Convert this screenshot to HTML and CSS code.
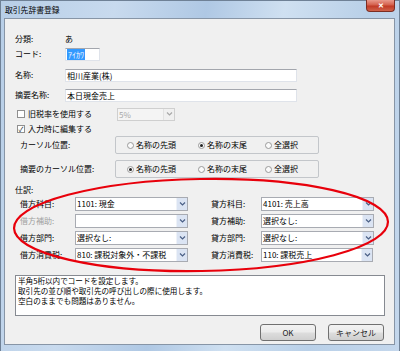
FILE: index.html
```html
<!DOCTYPE html>
<html lang="ja">
<head>
  <meta charset="UTF-8" />
  <title>取引先辞書登録</title>
  <link rel="stylesheet" href="styles.css">
</head>
<body>
  <div class="window">
    <div class="titlebar">
      <span class="title">取引先辞書登録</span>
      <span class="close">✕</span>
    </div>

    <div class="client">
      <div class="row r-kind"><span class="lbl">分類:</span><span>あ</span></div>
      <div class="row r-code"><span class="lbl">コード:</span><span class="edit code"><span class="hl">ｱｲｶﾜ</span></span></div>
      <div class="row r-name"><span class="lbl">名称:</span><span class="edit wide">相川産業(株)</span></div>
      <div class="row r-memo"><span class="lbl">摘要名称:</span><span class="edit wide">本日現金売上</span></div>

      <div class="row r-old">
        <span class="check-wrap"><span class="check"></span>旧税率を使用する</span>
        <span class="combo disabled rate"><span class="val">5%</span><span class="btn"><svg width="7" height="4" viewBox="0 0 7 4"><path d="M1 0.5 L3.5 3 L6 0.5" fill="none" stroke="#a8a8a8" stroke-width="1.2"/></svg></span></span>
      </div>
      <div class="row r-edit">
        <span class="check-wrap"><span class="check on">✓</span>入力時に編集する</span>
      </div>

      <div class="row r-cursor">
        <span class="lbl2">カーソル位置:</span>
        <div class="radio-box">
          <span class="opt"><span class="radio"></span>名称の先頭</span>
          <span class="opt"><span class="radio on"></span>名称の末尾</span>
          <span class="opt"><span class="radio"></span>全選択</span>
        </div>
      </div>
      <div class="row r-cursor2">
        <span class="lbl2">摘要のカーソル位置:</span>
        <div class="radio-box">
          <span class="opt"><span class="radio on"></span>名称の先頭</span>
          <span class="opt"><span class="radio"></span>名称の末尾</span>
          <span class="opt"><span class="radio"></span>全選択</span>
        </div>
      </div>

      <div class="row r-journal">仕訳:</div>
      <div class="journal" id="journal"></div>

      <div class="note">半角5桁以内でコードを設定します。<br>取引先の並び順や取引先の呼び出しの際に使用します。<br>空白のままでも問題はありません。</div>

      <div class="buttons">
        <button class="push">OK</button>
        <button class="push">キャンセル</button>
      </div>
    </div>
  </div>

  <svg class="mark" width="400" height="351" viewBox="0 0 400 351">
    <ellipse cx="201" cy="225" rx="187" ry="46" fill="none" stroke="#e8000b" stroke-width="2.2" transform="rotate(-1 201 225)"/>
  </svg>

  <script>
    const rows = [
      ["借方科目:", "1101: 現金", false, "貸方科目:", "4101: 売上高"],
      ["借方補助:", "", true, "貸方補助:", "選択なし:"],
      ["借方部門:", "選択なし:", false, "貸方部門:", "選択なし:"],
      ["借方消費税:", "810: 課税対象外・不課税", false, "貸方消費税:", "110: 課税売上"]
    ];

    const arrow = '<span class="btn"><svg width="7" height="4" viewBox="0 0 7 4"><path d="M1 0.5 L3.5 3 L6 0.5" fill="none" stroke="#4a5f86" stroke-width="1.2"/></svg></span>';

    let html = "";
    rows.forEach(r => {
      html += `<span class="jl${r[2] ? " dim" : ""}">${r[0]}</span>`;
      html += `<span class="cell"><span class="combo"><span class="val">${r[1]}</span>${arrow}</span></span>`;
      html += `<span class="jl">${r[3]}</span>`;
      html += `<span class="cell"><span class="combo"><span class="val">${r[4]}</span>${arrow}</span></span>`;
    });
    document.getElementById("journal").innerHTML = html;
  </script>
</body>
</html>
```

FILE: styles.css
```css
* { box-sizing: border-box; }
body { margin: 0; width: 400px; height: 351px; overflow: hidden; font-family: "Noto Sans CJK JP", sans-serif; font-size: 8px; color: #000; }

.window {
  height: 351px;
  display: flex;
  flex-direction: column;
  border: 1px solid #6f8196;
  border-bottom: 0;
  background: linear-gradient(100deg, #b7cee7 0%, #c8daee 25%, #afc8e4 45%, #cfe0f1 62%, #b9d0e8 80%, #c4d7ec 100%);
}
.titlebar { height: 17px; display: flex; align-items: flex-start; }
.title { padding-left: 4px; line-height: 18px; font-size: 7.8px; }
.close {
  margin-left: auto;
  margin-right: 4px;
  width: 29px;
  height: 12px;
  margin-top: -1px;
  border: 1px solid #7c2d22;
  border-top: 0;
  border-radius: 0 0 4px 4px;
  background: linear-gradient(#e99a8c, #d4604c 45%, #c13a25 55%, #d0624a);
  color: #fff;
  font-size: 7px;
  font-weight: bold;
  text-align: center;
  line-height: 11px;
}

.client {
  margin: 0 4px 0 3px;
  height: 327px;
  border: 1px solid #8795a6;
  background: #f0f0f0;
  padding: 13px 0 0 10px;
}

.row { display: flex; align-items: center; height: 14px; line-height: 14px; white-space: nowrap; }
.lbl { width: 50px; }
.r-code { margin-top: 1px; }
.r-name { margin-top: 7px; }
.r-memo { margin-top: 6px; }
.r-old { margin-top: 5px; }
.r-edit { margin-top: 1px; }
.r-cursor { height: 18px; }
.r-cursor2 { height: 18px; margin-top: 6px; }
.r-journal { margin-top: 5px; }

.edit {
  height: 13px;
  line-height: 12px;
  background: #fff;
  border: 1px solid #dfe3ea;
  border-top-color: #a3a6ad;
  padding-left: 1px;
}
.edit.code { width: 35px; }
.edit.wide { width: 232px; }
.hl { background: #3399ff; color: #fff; padding: 0 1px; }

.check-wrap { width: 102px; display: flex; align-items: center; padding-left: 2px; }
.check {
  width: 8px;
  height: 8px;
  border: 1px solid #8f8f8f;
  background: #fff;
  margin-right: 3px;
  font-size: 7px;
  line-height: 6px;
  text-align: center;
  color: #222;
}

.combo {
  display: flex;
  height: 14px;
  border: 1px solid #a8abb2;
  background: #fff;
  line-height: 12px;
}
.combo .val { flex: 1; padding-left: 1px; overflow: hidden; }
.combo .btn {
  width: 11px;
  display: flex;
  align-items: center;
  justify-content: center;
  background: #dbe4f3;
  border-left: 1px solid #eef2f8;
}
.combo.disabled { background: #f4f4f4; border-color: #cfcfcf; color: #a8a8a8; }
.combo.disabled .btn { background: #f0f0f0; border-left-color: #e2e2e2; }
.rate { width: 58px; height: 13px; }

.lbl2 { width: 100px; padding-left: 5px; }
.radio-box {
  width: 204px;
  height: 18px;
  border: 1px solid #c3c6ca;
  border-radius: 2px;
  display: flex;
  align-items: center;
  padding-left: 11px;
}
.opt { display: flex; align-items: center; }
.opt:nth-child(1) { width: 71px; }
.opt:nth-child(2) { width: 67px; }
.radio {
  width: 7px;
  height: 7px;
  border: 1px solid #9a9a9a;
  border-radius: 50%;
  background: #fafafa;
  margin-right: 2px;
  display: flex;
  align-items: center;
  justify-content: center;
}
.radio.on::after { content: ""; width: 3px; height: 3px; border-radius: 50%; background: #222; }

.journal {
  display: grid;
  grid-template-columns: 60px 131px 55px 112px;
  grid-auto-rows: 14px;
  row-gap: 3px;
  line-height: 14px;
  white-space: nowrap;
}
.jl { padding-left: 5px; }
.jl.dim { color: #a0a0a0; }
.cell .combo { width: 113px; }
.cell:last-child .combo { width: 112px; }

.note {
  margin-top: 13px;
  width: 370px;
  height: 41px;
  border: 1px solid #868a91;
  background: #fff;
  padding: 0 2px;
  line-height: 10px;
  font-size: 7.6px;
}

.buttons { display: flex; justify-content: flex-end; gap: 12px; margin-top: 8px; padding-right: 10px; }
.push {
  width: 56px;
  height: 17px;
  border: 1px solid #707070;
  border-radius: 3px;
  background: linear-gradient(#f2f2f2, #ebebeb 48%, #dddddd 52%, #cfcfcf);
  font-family: "Noto Sans CJK JP", sans-serif;
  font-size: 8px;
  padding: 0;
  color: #222;
}

.mark { position: absolute; left: 0; top: 0; pointer-events: none; }
```
